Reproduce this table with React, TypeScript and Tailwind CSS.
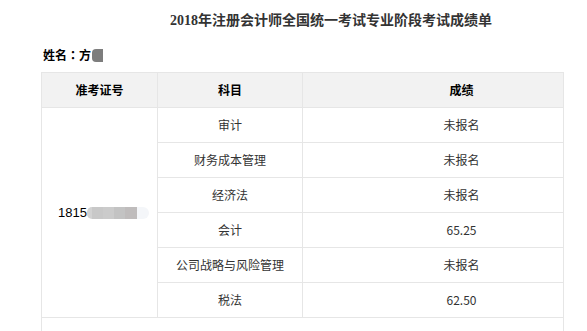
const rows = [
  { subject: "审计", score: "未报名" },
  { subject: "财务成本管理", score: "未报名" },
  { subject: "经济法", score: "未报名" },
  { subject: "会计", score: "65.25" },
  { subject: "公司战略与风险管理", score: "未报名" },
  { subject: "税法", score: "62.50" },
];

export default function App() {
  return (
    <div className="h-[331px] overflow-hidden bg-white pl-[41px] pt-[10px] text-[#333] font-['Noto_Sans_CJK_SC',sans-serif]">
      <h1 className="w-[580px] text-center text-[14px] font-bold leading-[18px] text-[#333]">
        <span className="font-['Liberation_Serif','Noto_Sans_CJK_SC',serif]">2018</span>
        年注册会计师全国统一考试专业阶段考试成绩单
      </h1>

      <div className="mt-[17px] flex items-center pl-[2px] text-[12px] font-bold leading-[16px] text-black">
        <span>姓名</span>
        <span className="font-['Noto_Sans_CJK_TC',sans-serif]">：</span>
        <span>方</span>
        <span className="ml-[1px] h-[13px] w-[11px] rounded-l-[4px] bg-[#7d7d7d]" />
      </div>

      <table className="mt-[9px] w-[522px] table-fixed border-collapse text-[12px]">
        <colgroup>
          <col className="w-[116px]" />
          <col className="w-[145px]" />
          <col className="w-[261px]" />
        </colgroup>
        <thead>
          <tr className="h-[35px] bg-[#f2f2f2] font-bold text-black">
            <th className="border border-[#e6e6e6] font-bold">准考证号</th>
            <th className="border border-[#e6e6e6] font-bold">科目</th>
            <th className="border border-[#e6e6e6] pl-[57px] font-bold">成绩</th>
          </tr>
        </thead>
        <tbody>
          {rows.map((r, i) => (
            <tr key={r.subject} className="h-[35px]">
              {i === 0 && (
                <td rowSpan={6} className="border border-[#e6e6e6] pl-[16px] align-middle">
                  <div className="flex items-center">
                    <span className="font-['Liberation_Sans','Noto_Sans_CJK_SC',sans-serif] text-[13px] text-black">1815</span>
                    <span className="flex h-[12px]">
                      <span className="w-[5px] rounded-l-[6px] bg-[#d2d2d2]" />
                      <span className="w-[11px] bg-[#c8c8c8]" />
                      <span className="w-[11px] bg-[#cbcbcb]" />
                      <span className="w-[11px] bg-[#c3c3c3]" />
                      <span className="w-[12px] bg-[#bfbcbc]" />
                      <span className="w-[12px] rounded-r-[6px] bg-[#f4f6f9]" />
                    </span>
                  </div>
                </td>
              )}
              <td className="border border-[#e6e6e6] text-center">{r.subject}</td>
              <td className="border border-[#e6e6e6] pl-[57px] text-center">{r.score}</td>
            </tr>
          ))}
          <tr className="h-[35px]">
            <td colSpan={3} className="border border-[#e6e6e6]" />
          </tr>
        </tbody>
      </table>
    </div>
  );
}
